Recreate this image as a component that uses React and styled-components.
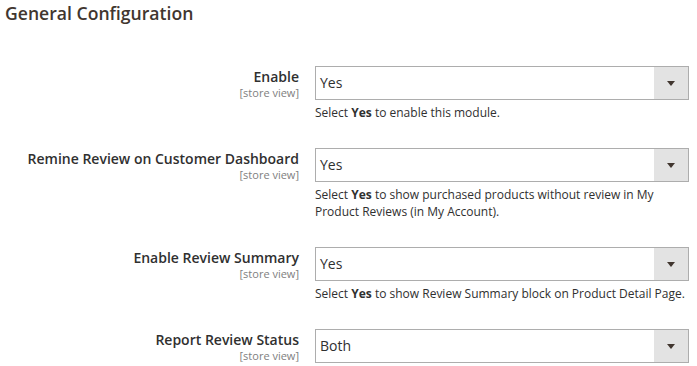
import React from 'react'
import styled, { createGlobalStyle } from 'styled-components'

const GlobalStyle = createGlobalStyle`
body {
  margin: 0;
  background: #fff;
  font-family: 'Open Sans', 'Liberation Sans', sans-serif;
  color: #303030;
}
`

const Page = styled.div`
  width: 697px;
  padding-top: 3px;
`

const Title = styled.h2`
  margin: 0 0 43px 5px;
  font-size: 17.6px;
  line-height: 20px;
  font-weight: 600;
  color: #41362f;
`

const Row = styled.div`
  display: grid;
  grid-template-columns: 299px 374px;
  column-gap: 16px;
  margin-bottom: 27px;
`

const LabelCol = styled.div`
  text-align: right;
  padding-top: 1px;
`

const Label = styled.div`
  font-size: 14px;
  line-height: 19px;
  font-weight: 600;
  color: #303030;
`

const Scope = styled.div`
  font-size: 11px;
  line-height: 13px;
  color: #808080;
`

const Select = styled.div`
  display: flex;
  height: 34px;
  box-sizing: border-box;
  border: 1px solid #adadad;
  background: #fff;
`

const Value = styled.span`
  flex: 1;
  padding-left: 4px;
  font-size: 14px;
  line-height: 32px;
  color: #303030;
`

const Arrow = styled.span`
  width: 34px;
  background: #e3e3e3;
  display: flex;
  align-items: center;
  justify-content: center;

  &::after {
    content: '';
    border-left: 4px solid transparent;
    border-right: 4px solid transparent;
    border-top: 5px solid #41362f;
  }
`

const Note = styled.p`
  margin: 4px 0 0;
  font-size: 12px;
  line-height: 17px;
  color: #303030;
`

const fields = [
  { label: 'Enable', value: 'Yes', note: 'to enable this module.' },
  { label: 'Remine Review on Customer Dashboard', value: 'Yes', note: 'to show purchased products without review in My Product Reviews (in My Account).' },
  { label: 'Enable Review Summary', value: 'Yes', note: 'to show Review Summary block on Product Detail Page.' },
  { label: 'Report Review Status', value: 'Both' },
]

export default function App() {
  return (
    <Page>
      <GlobalStyle />
      <Title>General Configuration</Title>
      {fields.map(f => (
        <Row key={f.label}>
          <LabelCol>
            <Label>{f.label}</Label>
            <Scope>[store view]</Scope>
          </LabelCol>
          <div>
            <Select>
              <Value>{f.value}</Value>
              <Arrow />
            </Select>
            {f.note && (
              <Note>Select <strong>Yes</strong> {f.note}</Note>
            )}
          </div>
        </Row>
      ))}
    </Page>
  )
}
